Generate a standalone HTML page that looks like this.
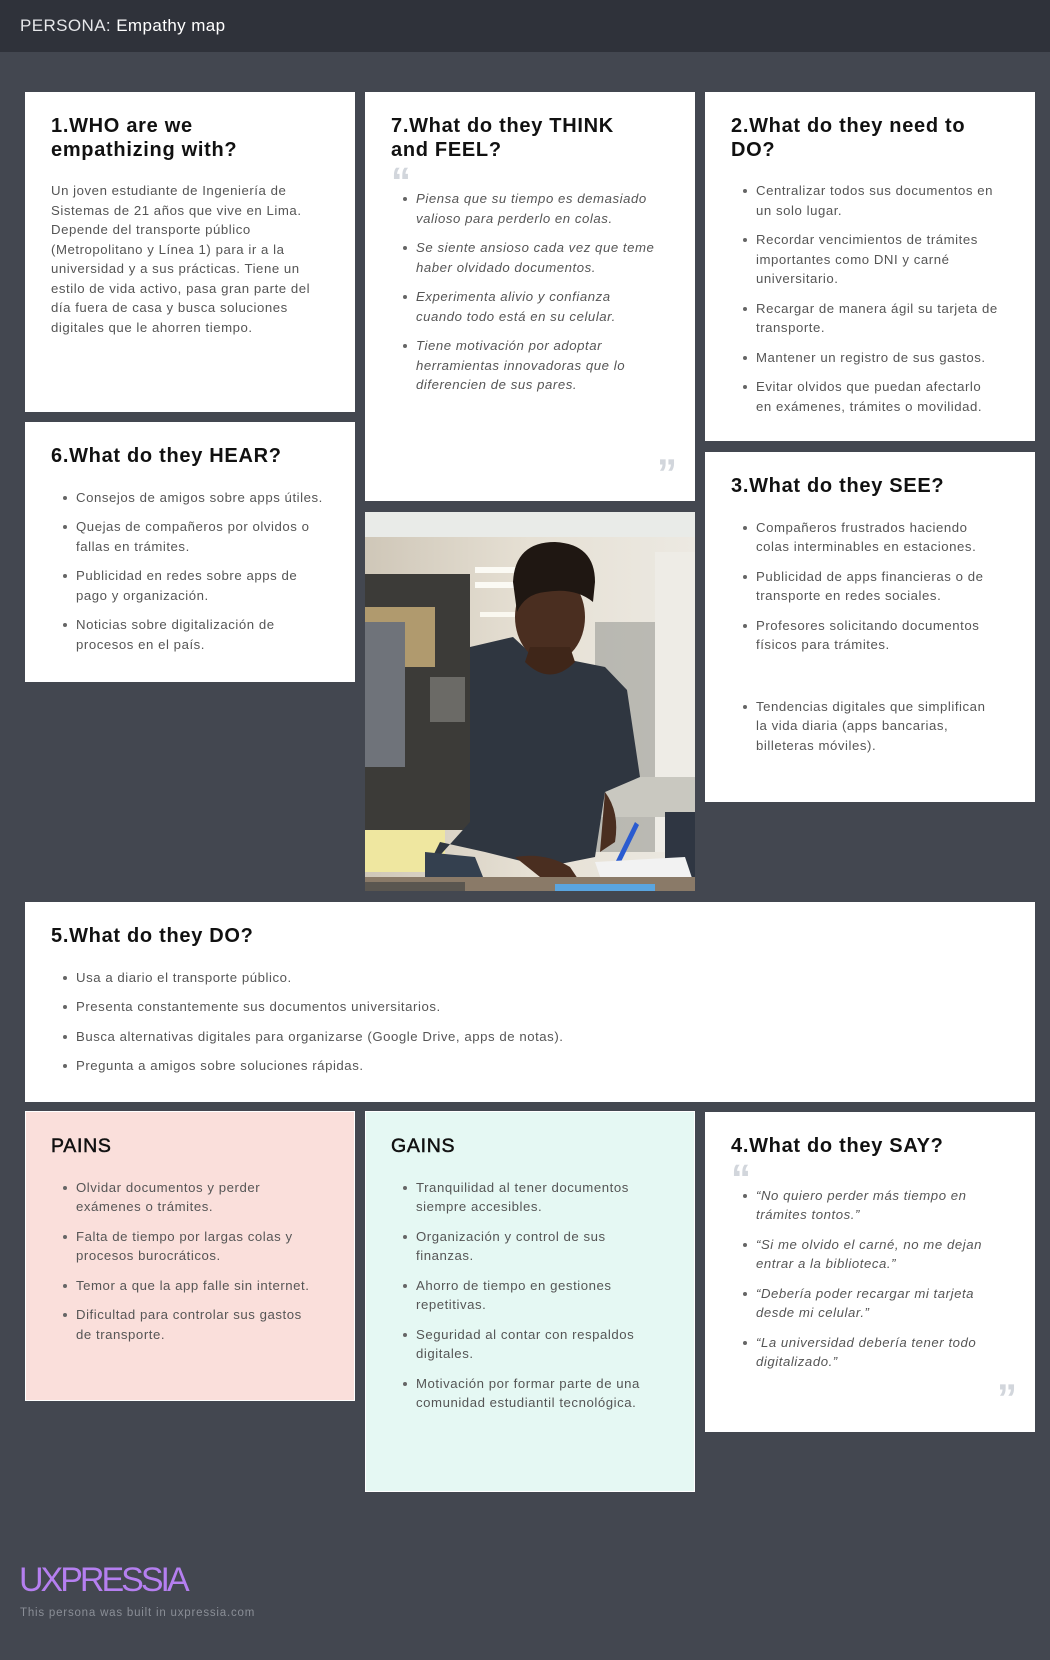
<!DOCTYPE html>
<html><head><meta charset="utf-8">
<style>
*{box-sizing:border-box;margin:0;padding:0}
html,body{width:1050px;height:1660px;overflow:hidden}
body{background:#434750;font-family:"Liberation Sans",sans-serif;position:relative}
.hdr{position:absolute;left:0;top:0;width:1050px;height:52px;background:#2f323a;color:#e6e7ea;font-size:17px;padding:16px 20px;letter-spacing:.4px}
.hdr b{font-weight:normal;color:#fff}
.c{position:absolute;background:#fff;padding:23px 26px 21px;color:#555;font-size:13.2px;line-height:19.5px;letter-spacing:.55px}
.c h2{font-size:20px;line-height:23.5px;color:#111;font-weight:bold;margin-bottom:19px;letter-spacing:.7px}
.c p{margin:0}
.c ul{list-style:none;padding-left:25px}
.c li{position:relative;margin-bottom:10px}
.c li:before{content:"";position:absolute;left:-13px;top:8px;width:4px;height:4px;border-radius:50%;background:#666}
.i li{font-style:italic}
.q{font-family:"Liberation Sans",sans-serif;font-weight:bold;color:#d2d6dc;font-size:40px;line-height:20px;height:17px;margin-top:-8px;margin-bottom:0;letter-spacing:-2px;overflow:visible}
.qc{position:absolute;right:20px;font-family:"Liberation Sans",sans-serif;font-weight:bold;color:#d2d6dc;font-size:40px;line-height:20px;letter-spacing:-2px}
.pg h2{font-weight:normal;font-size:19.5px;-webkit-text-stroke:.5px #111}
</style></head><body>
<div class="hdr">PERSONA: <b>Empathy map</b></div>

<div class="c" style="left:25px;top:92px;width:330px;height:320px">
<h2>1.WHO are we<br>empathizing with?</h2>
<p>Un joven estudiante de Ingeniería de<br>Sistemas de 21 años que vive en Lima.<br>Depende del transporte público<br>(Metropolitano y Línea 1) para ir a la<br>universidad y a sus prácticas. Tiene un<br>estilo de vida activo, pasa gran parte del<br>día fuera de casa y busca soluciones<br>digitales que le ahorren tiempo.</p>
</div>

<div class="c i" style="left:365px;top:92px;width:330px;height:409px">
<h2 style="margin-bottom:18px">7.What do they THINK<br>and FEEL?</h2>
<div class="q">“</div>
<ul>
<li>Piensa que su tiempo es demasiado<br>valioso para perderlo en colas.</li>
<li>Se siente ansioso cada vez que teme<br>haber olvidado documentos.</li>
<li>Experimenta alivio y confianza<br>cuando todo está en su celular.</li>
<li>Tiene motivación por adoptar<br>herramientas innovadoras que lo<br>diferencien de sus pares.</li>
</ul>
<div class="qc" style="top:372px">”</div>
</div>

<div class="c" style="left:705px;top:92px;width:330px;height:349px">
<h2>2.What do they need to<br>DO?</h2>
<ul>
<li>Centralizar todos sus documentos en<br>un solo lugar.</li>
<li>Recordar vencimientos de trámites<br>importantes como DNI y carné<br>universitario.</li>
<li>Recargar de manera ágil su tarjeta de<br>transporte.</li>
<li>Mantener un registro de sus gastos.</li>
<li>Evitar olvidos que puedan afectarlo<br>en exámenes, trámites o movilidad.</li>
</ul>
</div>

<div class="c" style="left:25px;top:422px;width:330px;height:260px">
<h2>6.What do they HEAR?</h2>
<ul>
<li>Consejos de amigos sobre apps útiles.</li>
<li>Quejas de compañeros por olvidos o<br>fallas en trámites.</li>
<li>Publicidad en redes sobre apps de<br>pago y organización.</li>
<li>Noticias sobre digitalización de<br>procesos en el país.</li>
</ul>
</div>

<svg style="position:absolute;left:365px;top:512px" width="330" height="379" viewBox="0 0 330 379">
<defs>
<linearGradient id="bg" x1="0" y1="0" x2="1" y2="0"><stop offset="0" stop-color="#cfc7b8"/><stop offset=".5" stop-color="#e6e0d4"/><stop offset="1" stop-color="#ece9e2"/></linearGradient>
</defs>
<rect width="330" height="379" fill="url(#bg)"/>
<rect width="330" height="25" fill="#e9ebe8"/>
<rect x="110" y="55" width="45" height="6" fill="#fbfaf4"/>
<rect x="110" y="70" width="45" height="6" fill="#fbfaf4"/>
<rect x="115" y="100" width="40" height="5" fill="#faf8f0"/>
<rect x="230" y="110" width="60" height="230" fill="#9a9b96" opacity=".6"/>
<rect x="290" y="40" width="40" height="300" fill="#eeece6"/>
<rect x="0" y="300" width="80" height="60" fill="#efe7a0"/>
<rect x="220" y="265" width="110" height="40" fill="#c9c8c0"/>
<rect x="300" y="300" width="30" height="80" fill="#2f3642"/>
<path d="M0 62 H105 V318 H0 Z" fill="#3c3b38"/>
<path d="M0 95 H70 V155 H0 Z" fill="#b09a6e"/>
<path d="M0 110 H40 V255 H0 Z" fill="#6f737a"/>
<path d="M65 165 H100 V210 H65 Z" fill="#6b6a66"/>
<path d="M105 135 L148 125 L175 150 L205 148 L240 155 L262 178 L275 265 L240 280 L230 345 L180 355 L120 340 L75 330 L60 360 L105 310 Z" fill="#2f3640"/>
<path d="M60 340 L110 345 L120 370 L60 370 Z" fill="#34404f"/>
<ellipse cx="185" cy="105" rx="35" ry="45" fill="#4a2e20"/>
<path d="M148 70 Q150 30 190 30 Q230 32 230 70 L228 90 Q210 75 180 80 Q160 82 152 100 Z" fill="#1f1712"/>
<path d="M160 150 Q185 175 210 150 L205 135 L165 135 Z" fill="#3f2619"/>
<path d="M240 280 Q255 300 250 330 L235 340 Z" fill="#4a2e20"/>
<path d="M150 345 Q180 340 205 355 L215 370 L175 365 Z" fill="#4a2e20"/>
<path d="M248 355 L270 310 L274 313 L252 358 Z" fill="#2a5bd0"/>
<path d="M230 350 L320 345 L330 375 L240 379 Z" fill="#f2f2f2"/>
<rect y="365" width="330" height="14" fill="#8a7a68"/>
<rect x="0" y="370" width="100" height="9" fill="#5a5650"/>
<rect x="190" y="372" width="100" height="7" fill="#5aa5e0"/>
</svg>

<div class="c" style="left:705px;top:452px;width:330px;height:350px">
<h2>3.What do they SEE?</h2>
<ul>
<li>Compañeros frustrados haciendo<br>colas interminables en estaciones.</li>
<li>Publicidad de apps financieras o de<br>transporte en redes sociales.</li>
<li>Profesores solicitando documentos<br>físicos para trámites.</li>
<div style="height:32px"></div>
<li>Tendencias digitales que simplifican<br>la vida diaria (apps bancarias,<br>billeteras móviles).</li>
</ul>
</div>

<div class="c" style="left:25px;top:902px;width:1010px;height:200px">
<h2>5.What do they DO?</h2>
<ul>
<li>Usa a diario el transporte público.</li>
<li>Presenta constantemente sus documentos universitarios.</li>
<li>Busca alternativas digitales para organizarse (Google Drive, apps de notas).</li>
<li>Pregunta a amigos sobre soluciones rápidas.</li>
</ul>
</div>

<div class="c pg" style="left:25px;top:1111px;width:330px;height:290px;background:#fadfdb;border:1px solid #fff;padding:23px 25px 21px">
<h2>PAINS</h2>
<ul>
<li>Olvidar documentos y perder<br>exámenes o trámites.</li>
<li>Falta de tiempo por largas colas y<br>procesos burocráticos.</li>
<li>Temor a que la app falle sin internet.</li>
<li>Dificultad para controlar sus gastos<br>de transporte.</li>
</ul>
</div>

<div class="c pg" style="left:365px;top:1111px;width:330px;height:381px;background:#e5f8f3;border:1px solid #fff;padding:23px 25px 21px">
<h2>GAINS</h2>
<ul>
<li>Tranquilidad al tener documentos<br>siempre accesibles.</li>
<li>Organización y control de sus<br>finanzas.</li>
<li>Ahorro de tiempo en gestiones<br>repetitivas.</li>
<li>Seguridad al contar con respaldos<br>digitales.</li>
<li>Motivación por formar parte de una<br>comunidad estudiantil tecnológica.</li>
</ul>
</div>

<div class="c i" style="left:705px;top:1112px;width:330px;height:320px">
<h2 style="margin-bottom:18px">4.What do they SAY?</h2>
<div class="q">“</div>
<ul>
<li>“No quiero perder más tiempo en<br>trámites tontos.”</li>
<li>“Si me olvido el carné, no me dejan<br>entrar a la biblioteca.”</li>
<li>“Debería poder recargar mi tarjeta<br>desde mi celular.”</li>
<li>“La universidad debería tener todo<br>digitalizado.”</li>
</ul>
<div class="qc" style="top:277px">”</div>
</div>

<div style="position:absolute;left:19px;top:1560px;font-size:34px;line-height:40px;color:#b57ff0;letter-spacing:-3px;font-family:'Liberation Sans',sans-serif">UXPRESSIA</div>
<div style="position:absolute;left:20px;top:1607px;font-size:11.5px;color:#8a8e96;letter-spacing:.8px">This persona was built in uxpressia.com</div>
</body></html>
